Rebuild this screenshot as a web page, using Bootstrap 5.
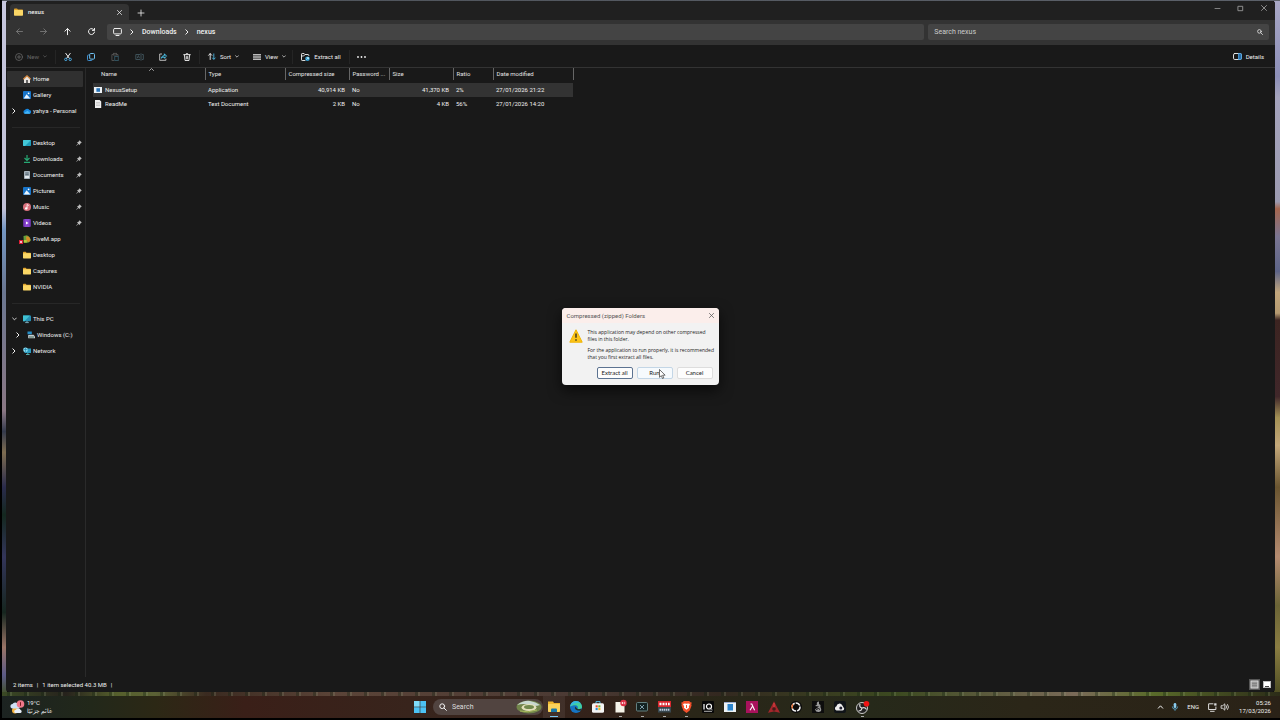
<!DOCTYPE html>
<html lang="en">
<head>
<meta charset="utf-8">
<meta name="viewport" content="width=device-width, initial-scale=1">
<title>nexus</title>
<link href="https://cdn.jsdelivr.net/npm/bootstrap@5.3.0/dist/css/bootstrap.min.css" rel="stylesheet">
<style>
body{font-family:Roboto,"Noto Sans",sans-serif;font-size:6px;line-height:10px;color:#f0f0f0;background:#000;overflow:hidden}
svg{display:block;flex:none;overflow:visible}
button{background:none;border:0;color:inherit;padding:0;font-size:inherit;line-height:inherit}
a{color:inherit;text-decoration:none}
.s{fill:none;stroke:currentColor;stroke-linecap:round;stroke-linejoin:round}
.desk{padding:1px 5px 4px 4px;margin-left:2px;background:
 repeating-linear-gradient(90deg,#0000 0 5px,#1215 5px 8px,#9a83 8px 10px,#0000 10px 17px) bottom/100% 4px no-repeat,
 linear-gradient(90deg,#3b4a25,#26221c 5%,#56602c 9%,#5b6135 12%,#3a2a20 16%,#5b4438 26%,#4b3a34 45%,#332820 56%,#3c4a20 70%,#7a6a58 84%,#5a6b2a 90%,#2c2c18) bottom/100% 4px no-repeat,
 linear-gradient(90deg,#4c5158,#5c616a) top/100% 1px no-repeat,
 linear-gradient(#c5c6dd 0,#c0c0d6 30%,#7396c2 33%,#6a7690 42%,#8a7784 59%,#343a4c 62%,#7d6c50 65%,#2a2b4c 70%,#14281f 74%,#33355a 80%,#16261f 88%,#9a7466 93%,#5b5a86 97%,#405020 100%) left/5px 100% no-repeat,
 linear-gradient(#a9a8c6 0,#8d8fb8 11%,#a5a4bd 14%,#9c9ab0 29%,#a5664f 30%,#7a7592 34%,#5d6488 39%,#c2a67c 42%,#b59a70 45%,#3c2421 46%,#40272a 57%,#a39054 60%,#c4a87a 64%,#6a5530 70%,#b58b70 80%,#6b6436 87%,#8a7d42 93%,#4a4a20 100%) right/6px 100% no-repeat}
.win{background:#191919;border-radius:3px}
.titlebar{height:19px;background:#202020;border-radius:3px 3px 0 0;padding-left:4px}
.tab{width:119px;height:16px;background:#333;border-radius:4px 4px 0 0;padding:0 7px 0 4px;gap:5px;font-weight:500}
.cap{width:23px;height:14px;color:#999}
.navrow{height:25px;background:#333;padding:0 6px 2px 1px;font-size:7px}
.nb{width:24px}
.field{height:16px;background:#444;border-radius:2px}
.crumb{gap:8px;padding-left:6px;font-weight:500}
.field input{background:none;border:0;color:#ccc;font-size:7px;padding:0;outline:0;min-width:0}
.field input::placeholder{color:#ccc;opacity:1}
.findbox{flex:0 0 27%;padding:0 6px}
.tools{height:23px;border-bottom:1px solid #333;padding:1px 11px 0 1px;font-weight:500}
.tools button{height:14px;display:flex;align-items:center;justify-content:center;gap:4px}
.dim{color:#666}
.dimmer{color:#777}
.sep{border-left:1px solid #252525!important}
.side{width:80px;border-right:1px solid #2a2a2a;padding:3px 2px 0 1px}
.side a{height:16px;display:flex;align-items:center;gap:2px;position:relative;white-space:nowrap;border-radius:1px;padding-right:1px}
.side a.on{background:#303030}
.slot{width:14px;flex:none;display:flex;justify-content:center}
.side .sub{padding-left:4px}
.side hr{margin:8px 3px 7px 5px;border-color:#555}
.pin{margin-left:auto;color:#bbb}
.dot{left:13px;top:9px}
.files{width:480px;table-layout:fixed;margin:0 0 0 7px}
.files th{font-weight:400;height:12px;padding:0 3px;border-right:1px solid #666;position:relative;white-space:nowrap;overflow:hidden;color:#e4e4e4}
.files th:first-child{padding-left:8px}
.files thead::after{content:"";display:block;height:3px}
.files td{height:14px;padding:0 4px 0 3px;white-space:nowrap}
.files td:first-child{padding-left:1px}
.fname{display:flex;align-items:center;gap:3px}
.files .pick td{background:#333;border-bottom:1px solid #191919}
.sortmark{position:absolute;left:56px;top:0}
.status{height:15px;padding:0 4px 0 7px;gap:4px}
.bar{height:22px;margin:0 0 2px 2px;display:grid;grid-template-columns:1fr auto 1fr;background:linear-gradient(90deg,#1c2321,#22281a 7%,#2c2815 12%,#3a1f18 19%,#38241c 32%,#33221a 47%,#2a2618 54%,#26291a 68%,#2b2618 80%,#2a2217)}
.wx{padding-left:8px;gap:3px}
.app{width:22px;height:22px;display:flex;align-items:center;justify-content:center;position:relative}
.run::after{content:"";position:absolute;bottom:1px;width:3px;height:1px;background:#aaa}
.run.cur{background:#fff1}
.run.cur::after{width:8px;background:#7ac4f0}
.tsearch{width:110px;height:16px;background:#514440;border-radius:8px;padding:0 1px 0 6px;gap:5px;margin-left:2px}
.tsearch input{background:none;border:0;padding:0;outline:0;min-width:0;color:#ddd;font-size:7px}
.tsearch input::placeholder{color:#ddd;opacity:1}
.tray{gap:9px;padding-right:9px}
.tiny{line-height:8px}
.over{position:absolute;inset:0 0 28px 0;display:flex;align-items:center;justify-content:center}
.dlg{width:157px;background:#f2f2f2;border-radius:4px;color:#222;box-shadow:0 5px 14px #000a;line-height:7px}
.dlg header{height:15px;background:#fbeeeb;color:#555;border-radius:4px 4px 0 0;padding:0 5px}
.dlg p{margin:0 0 4px;font-family:"Open Sans",sans-serif;font-size:5px}
.dbody{padding:6px 0 0 7px;gap:5px}
.dfoot{gap:4px;padding:2px 6px 6px;justify-content:flex-end}
.dfoot button{width:36px;height:12px;background:#fdfdfd;border:1px solid #ddd;border-radius:2px;position:relative;font-family:Lato,sans-serif}
.dfoot .main{border-color:#5c7391}
.dfoot .hot{border-color:#c3d6e6;background:#f6fafd}
.ptr{position:absolute;left:21px;top:1px}
</style>
</head>
<body class="vh-100 d-flex flex-column">
<svg width="0" height="0" class="position-absolute">
<symbol id="fold" viewBox="0 0 9 8"><path d="M0 1.2Q0 .4.8.4H3l1 1h4.2q.8 0 .8.8V4H0z" fill="#e0a32c"/><rect y="2" width="9" height="5.8" rx=".7" fill="#fbd766"/></symbol>
<symbol id="chr" viewBox="0 0 4 6"><path class="s" d="M.8.8 3 3 .8 5.2"/></symbol>
<symbol id="chd" viewBox="0 0 6 4"><path class="s" d="M.8.8 3 3 5.2.8"/></symbol>
<symbol id="x" viewBox="0 0 6 6"><path class="s" stroke-width=".9" d="m.5.5 5 5m0-5-5 5"/></symbol>
<symbol id="pin" viewBox="0 0 6 6"><path d="M3.4.2 5.8 2.6 4.6 3.2 3.6 5 2.5 3.9.5 5.8.2 5.5 2.1 3.5 1 2.4l1.8-1z" fill="currentColor"/></symbol>
<symbol id="mag" viewBox="0 0 8 8"><circle class="s" cx="3.2" cy="3.2" r="2.4"/><path class="s" d="M5 5l2.4 2.4"/></symbol>
<symbol id="pic" viewBox="0 0 8 8"><rect width="8" height="8" rx="1" fill="#1874c8"/><path d="M.6 7.4 3.6 3.2 7.4 7.4z" fill="#e9f5ff"/><circle cx="5.6" cy="2.3" r=".9" fill="#fff"/></symbol>
</svg>

<main class="desk flex-grow-1 d-flex flex-column">
<section class="win flex-grow-1 d-flex flex-column">
  <div class="titlebar d-flex align-items-end">
    <div class="tab d-flex align-items-center"><svg width="9" height="8"><use href="#fold"/></svg><span>nexus</span><button class="ms-auto" aria-label="Close tab"><svg width="5" height="5"><use href="#x"/></svg></button></div>
    <button class="nb d-flex justify-content-center align-self-center pt-1" aria-label="New tab"><svg width="6" height="6"><path class="s" stroke-width=".8" d="M3 0v6M0 3h6"/></svg></button>
    <div class="ms-auto d-flex align-self-start">
      <button class="cap d-flex align-items-center justify-content-center" aria-label="Minimise"><svg width="5" height="5"><path class="s" stroke-width=".8" d="M0 2.5h5"/></svg></button>
      <button class="cap d-flex align-items-center justify-content-center" aria-label="Maximise"><svg width="5" height="5"><path class="s" stroke-width=".9" d="M.3.3h4.4v4.4H.3z"/></svg></button>
      <button class="cap d-flex align-items-center justify-content-center" aria-label="Close"><svg width="6" height="6"><use href="#x"/></svg></button>
    </div>
  </div>
  <div class="navrow d-flex align-items-center">
    <button class="nb d-flex justify-content-center dimmer" aria-label="Back"><svg width="7" height="7"><path class="s" stroke-width=".9" d="M6.5 3.5H.6M3.2.8.5 3.5l2.7 2.7"/></svg></button>
    <button class="nb d-flex justify-content-center dimmer" aria-label="Forward"><svg width="7" height="7"><path class="s" stroke-width=".9" d="M.5 3.5h5.9M3.8.8l2.7 2.7-2.7 2.7"/></svg></button>
    <button class="nb d-flex justify-content-center" aria-label="Up"><svg width="7" height="7"><path class="s" stroke-width="1" d="M3.5 6.7V.6M.9 3.2 3.5.5l2.6 2.7"/></svg></button>
    <button class="nb d-flex justify-content-center" aria-label="Refresh"><svg width="7" height="7"><path class="s" stroke-width="1" d="M6.2 2.2A3 3 0 1 0 6.5 4M6.5.4v2H4.4"/></svg></button>
    <nav class="field crumb flex-grow-1 d-flex align-items-center ms-1 me-1" aria-label="Path">
      <svg width="9" height="8"><rect class="s" x=".6" y=".5" width="7.8" height="5.4" rx="1"/><path class="s" d="M3 7.5h3"/></svg>
      <svg width="4" height="6"><use href="#chr"/></svg><a href="#">Downloads</a>
      <svg width="4" height="6"><use href="#chr"/></svg><a href="#">nexus</a>
    </nav>
    <div class="field findbox d-flex align-items-center"><input class="flex-grow-1" type="text" placeholder="Search nexus" aria-label="Search nexus"><svg width="6" height="6"><use href="#mag"/></svg></div>
  </div>
  <div class="tools d-flex align-items-center">
    <button class="dim" style="width:48px"><svg width="8" height="8"><circle class="s" cx="4" cy="4" r="3.5" stroke-width=".8"/><path class="s" stroke-width=".8" d="M4 2.4v3.2M2.4 4h3.2"/></svg>New<svg width="4" height="3"><use href="#chd"/></svg></button>
    <button class="nb sep" aria-label="Cut"><svg width="8" height="8"><path class="s" d="m1.8.4 3.6 5M6.2.4l-3.6 5"/><g fill="none" stroke="#4aa8e0"><circle cx="1.8" cy="6.4" r="1.2"/><circle cx="6.2" cy="6.4" r="1.2"/></g></svg></button>
    <button class="nb" aria-label="Copy"><svg width="8" height="8"><path fill="none" stroke="#3f8fd0" d="M2.5 2H1.2q-.7 0-.7.7v4q0 .8.8.8h3.2q.7 0 .8-.9"/><rect x="2.7" y=".5" width="4.8" height="5.6" rx="1" fill="none" stroke="#6fc0f0"/></svg></button>
    <button class="nb" aria-label="Paste"><svg width="8" height="8" fill="none" stroke="#4e4e4e"><path d="M3 7.5H.9v-6h1.6M5.4 1.5H7V3"/><rect x="2.5" y=".4" width="3" height="1.6"/><rect x="3.7" y="3.5" width="3.6" height="4" stroke="#31505c"/></svg></button>
    <button class="nb" aria-label="Rename"><svg width="9" height="8" fill="none" stroke="#3e5058"><path d="M5 1.5H.8v5H5M7 1.5h1.3v5H7M6 .3v7.4M2.2 5.2l1.2-2.6 1 2.6"/></svg></button>
    <button class="nb" aria-label="Share"><svg width="8" height="8" fill="none"><path stroke="#ccc" stroke-width=".9" d="M3 1H.7v6.3h6.2V5.6"/><path stroke="#4cc3ea" d="M2.4 5.2q.3-2.6 3-2.6V.8l2.1 2.4-2.1 2V4Q3.4 3.9 2.4 5.2z"/></svg></button>
    <button class="nb" aria-label="Delete"><svg width="8" height="8"><path class="s" d="M.7 1.7h6.6M2.9 1.5q0-1.100 1.100-1.100t1.100 1.100M1.400 1.900l.6 5.600h4l.6-5.600M3.300 3.500v2.400M4.700 3.500v2.400" stroke-width=".9"/></svg></button>
    <button class="sep" style="width:48px"><svg width="8" height="7"><path class="s" stroke-width=".9" d="M2.200 6.500V.7M.6 2.300 2.200.6l1.600 1.700"/><path d="M5.800.5v5.800M4.200 4.700l1.600 1.700 1.600-1.700" fill="none" stroke="#4cb4e0" stroke-width=".9"/></svg>Sort<svg width="4" height="3"><use href="#chd"/></svg></button>
    <button style="width:45px"><svg width="8" height="6"><path d="M0 .8h8M0 3h8M0 5.200h8" stroke="#bbb" stroke-width="1.400"/></svg>View<svg width="4" height="3"><use href="#chd"/></svg></button>
    <button class="sep" style="width:57px"><svg width="9" height="8"><path class="s" stroke-width=".9" d="M4 7.500H1.200q-.7 0-.7-.7V1.200q0-.7.7-.7h1.900l1 1h3q.8 0 .8.9M.6 3h2l1.500-1.500"/><circle cx="6.500" cy="5.700" r="2.300" fill="#2f9bd0"/><path d="m5.400 6.700 2-2M5.800 4.600h1.700v1.700" fill="none" stroke="#dff" stroke-width=".7"/></svg>Extract all</button>
    <button class="nb sep" aria-label="More"><svg width="9" height="2" fill="currentColor"><circle cx="1" cy="1" r=".9"/><circle cx="4.500" cy="1" r=".9"/><circle cx="8" cy="1" r=".9"/></svg></button>
    <button class="ms-auto"><svg width="9" height="7"><rect class="s" x=".5" y=".5" width="8" height="6" rx="1.300" stroke-width=".9"/><path d="M5.500.5h1.700q1.300 0 1.300 1.300v3.400q0 1.300-1.300 1.300H5.500z" fill="#2a6ea8" stroke="#4ea6e6" stroke-width=".8"/></svg>Details</button>
  </div>
  <div class="d-flex flex-grow-1">
    <nav class="side" aria-label="Folders">
      <a class="on" href="#"><span class="slot"></span><svg width="8" height="8"><path d="M1 3.500V8h2.300V5h1.400v3H7V3.500L4 1z" fill="#e8e4e0"/><path d="M.3 4.300 4 .800l3.700 3.500" fill="none" stroke="#d98c42" stroke-width="1.200"/></svg>Home</a>
      <a href="#"><span class="slot"></span><svg width="8" height="8"><use href="#pic"/></svg>Gallery</a>
      <a href="#"><span class="slot"><svg width="4" height="6"><use href="#chr"/></svg></span><svg width="8" height="8"><path d="M2 6.800a1.900 1.900 0 0 1-.2-3.700A2.600 2.600 0 0 1 6.400 3 1.900 1.900 0 0 1 6.200 6.800z" fill="#1687e0"/><path d="M1 6 4.600 3.800l2.800 2.500-1 .5H2z" fill="#45b5f5"/></svg>yahya - Personal</a>
      <hr>
      <a href="#"><span class="slot"></span><svg width="8" height="8"><rect y="1" width="8" height="6" rx=".8" fill="#1e9cb8"/><path d="M0 1.800Q0 1 .800 1H8L2 7H.8Q0 7 0 6.200z" fill="#43c8d8"/></svg>Desktop<svg class="pin" width="6" height="6"><use href="#pin"/></svg></a>
      <a href="#"><span class="slot"></span><svg width="8" height="8"><path d="M4 0v5M1.500 3 4 5.400 6.500 3M1 7.400h6" fill="none" stroke="#27a873" stroke-width="1.200"/></svg>Downloads<svg class="pin" width="6" height="6"><use href="#pin"/></svg></a>
      <a href="#"><span class="slot"></span><svg width="8" height="8"><rect x="1" width="6" height="8" rx=".8" fill="#a8b4bd"/><path d="M2.300 2h3.400M2.300 3.700h3.400" stroke="#536471"/><path d="M2 5h4v2H2z" fill="#e4eaee"/></svg>Documents<svg class="pin" width="6" height="6"><use href="#pin"/></svg></a>
      <a href="#"><span class="slot"></span><svg width="8" height="8"><use href="#pic"/></svg>Pictures<svg class="pin" width="6" height="6"><use href="#pin"/></svg></a>
      <a href="#"><span class="slot"></span><svg width="8" height="8"><circle cx="4" cy="4" r="4" fill="#d9707c"/><circle cx="3.200" cy="5.400" r="1.200" fill="#fff"/><path d="M4.100 5.400V1.500l1.700 1" stroke="#fff" fill="none" stroke-width=".8"/></svg>Music<svg class="pin" width="6" height="6"><use href="#pin"/></svg></a>
      <a href="#"><span class="slot"></span><svg width="8" height="8"><rect x=".3" width="7.400" height="8" rx="1" fill="#8a45d0"/><path d="M1.200.500v7M6.800.500v7" stroke="#5b259a" stroke-dasharray="1 1"/><path d="m3 2.500 2.600 1.500L3 5.500z" fill="#fff"/></svg>Videos<svg class="pin" width="6" height="6"><use href="#pin"/></svg></a>
      <a href="#"><span class="slot"></span><svg class="dot position-absolute" width="4" height="4"><rect x="-1" width="4" height="4" fill="#dc1f36"/><path d="m0 1 2 2m0-2-2 2" stroke="#fff" stroke-width=".7"/></svg><svg width="8" height="8"><path d="M.5 1 4 .300l3 2.200.8 3.200L5 7.800H.8z" fill="#66a03c"/><path d="M3 1.500h2.500l2 3L6 7.300 3.500 6z" fill="#d98c28"/><path d="M.8 5h3v2.600h-3z" fill="#b9c83b"/></svg>FiveM.app</a>
      <a href="#"><span class="slot"></span><svg width="8" height="8"><use href="#fold"/></svg>Desktop</a>
      <a href="#"><span class="slot"></span><svg width="8" height="8"><use href="#fold"/></svg>Captures</a>
      <a href="#"><span class="slot"></span><svg width="8" height="8"><use href="#fold"/></svg>NVIDIA</a>
      <hr>
      <a href="#"><span class="slot"><svg width="5" height="4"><use href="#chd"/></svg></span><svg width="8" height="8"><rect y=".5" width="8" height="5.800" rx=".7" fill="#2690b4"/><path d="M0 .500h7L1.500 6.300H0z" fill="#3fc1d2"/><path d="M4 6v1.500M2.200 7.600h3.600" stroke="#7ab"/></svg>This PC</a>
      <a class="sub" href="#"><span class="slot"><svg width="4" height="6"><use href="#chr"/></svg></span><svg width="8" height="8"><path d="M.5.500h4.300v2.800H.5z" fill="#258ec8"/><path d="m1.200 4 5.300-.2L8 5.500v1.800H1.200z" fill="#c5cdd2"/><path d="M2 6h5" stroke="#465"/></svg>Windows (C:)</a>
      <a href="#"><span class="slot"><svg width="4" height="6"><use href="#chr"/></svg></span><svg width="8" height="8"><rect x="1.500" y="1.500" width="6.500" height="4.500" fill="#2a9bc0"/><circle cx="2.500" cy="2.800" r="2.400" fill="#8adcf0"/><path d="M.5 2.500h4M2.500.5v4.600" stroke="#1b80a8" stroke-width=".6"/><path d="M4.800 6v1.500M3 7.500h3.600" stroke="#5aa"/></svg>Network</a>
    </nav>
    <div>
      <table class="files">
        <colgroup><col style="width:112px"><col style="width:80px"><col style="width:64px"><col style="width:40px"><col style="width:64px"><col style="width:40px"><col style="width:80px"></colgroup>
        <thead><tr><th scope="col">Name<svg class="sortmark" width="5" height="3"><path class="s" stroke-width=".7" d="m.5 2.500 2-2 2 2"/></svg></th><th scope="col">Type</th><th scope="col">Compressed size</th><th scope="col">Password ...</th><th scope="col">Size</th><th scope="col">Ratio</th><th scope="col">Date modified</th></tr></thead>
        <tbody>
        <tr class="pick"><td><div class="fname"><svg width="8" height="8"><rect y="1" width="8" height="6" fill="#eef3f6"/><rect x="2.400" y="2.200" width="3.600" height="3.600" fill="#2874b8"/></svg>NexusSetup</div></td><td>Application</td><td class="text-end">40,914 KB</td><td>No</td><td class="text-end">41,370 KB</td><td>2%</td><td>27/01/2026 21:22</td></tr>
        <tr><td><div class="fname"><svg width="8" height="8"><path d="M1 0h4.600L7.200 1.600V8H1z" fill="#f0f0f0"/><path d="M2 2.500h4M2 4h4M2 5.500h4" stroke="#aaa" stroke-width=".5"/></svg>ReadMe</div></td><td>Text Document</td><td class="text-end">2 KB</td><td>No</td><td class="text-end">4 KB</td><td>56%</td><td>27/01/2026 14:20</td></tr>
        </tbody>
      </table>
    </div>
  </div>
  <footer class="status d-flex align-items-center"><span>2 items</span><span>|</span><span>1 item selected 40.3 MB</span><span>|</span>
    <span class="ms-auto d-flex"><button aria-label="Details view"><svg width="11" height="11"><rect width="11" height="11" fill="#555"/><rect x="2" y="2" width="7" height="7" fill="#999" stroke="#ddd"/><path d="M3 4.500h5M3 6.500h5" stroke="#777" stroke-width=".6"/></svg></button><button class="ps-1" style="width:11px" aria-label="Large icons"><svg width="7" height="11"><rect x="-.5" y="2.500" width="7" height="6" fill="#fff" stroke="#bbb"/><path d="M1 7.500h4" stroke="#444"/></svg></button></span>
  </footer>
</section>
</main>

<footer class="bar">
  <a href="#" class="wx d-flex align-items-center tiny"><svg width="14" height="14"><circle cx="5" cy="10.500" r="3" fill="#f4b23c"/><path d="M2 8.500a2.300 2.300 0 0 1 .5-4.500A3 3 0 0 1 8 4.500a2 2 0 0 1 0 4z" fill="#cfe0f5"/><path d="M5 13a1.800 1.800 0 0 1 1-3.300 2.500 2.500 0 0 1 4.600.4A1.500 1.500 0 0 1 10.500 13z" fill="#e8eef8"/><circle cx="10.500" cy="4" r="3.800" fill="#f0788a"/><path d="M10.500 2.200v3.600" stroke="#611" stroke-width=".9"/></svg><span>19°C<br><span lang="ar" dir="rtl">غائم جزئيًا</span></span></a>
  <div class="d-flex align-items-center">
    <button class="app" aria-label="Start"><svg width="12" height="12" fill="#4cc2f4"><path d="M0 0h5.700v5.700H0z" fill="#7fdcfa"/><path d="M6.300 0H12v5.700H6.300zM0 6.300h5.700V12H0zM6.300 6.300H12V12H6.300z"/></svg></button>
    <div class="tsearch d-flex align-items-center"><svg width="8" height="8"><use href="#mag"/></svg><input class="flex-grow-1" type="text" placeholder="Search" aria-label="Search"><svg width="26" height="14"><ellipse cx="13" cy="7" rx="12.500" ry="6.500" fill="#71844a"/><path d="M1 5Q8 0 14 1t10 4Q18 7 13 5T1 5z" fill="#c8d8d0"/><ellipse cx="13" cy="7.500" rx="7.500" ry="3.500" fill="#e1dfba"/><ellipse cx="13" cy="7" rx="5" ry="2" fill="#71894d"/><path d="M4 11q8 2 17-1" stroke="#a9b95d" fill="none"/></svg></div>
    <button class="app run cur" aria-label="File Explorer"><svg width="12" height="12"><path d="M0 .500h5l1 1.500h6V10H0z" fill="#f0b62d"/><rect y="3" width="12" height="8" rx=".7" fill="#fbd35c"/><path d="M3 11V8.500q0-1 1-1h4q1 0 1 1V11z" fill="#1878a8"/></svg></button>
    <button class="app" aria-label="Edge"><svg width="12" height="12"><circle cx="6" cy="6" r="6" fill="#1674c4"/><path d="M.2 5.500C1-1.500 12-1.300 12 6c0 2-3 2.700-4.600 1.500C9 5.500 6.500 2.500.2 5.500z" fill="#42cfa0"/><path d="M.2 5.500Q1 0 6 0q3 0 4.500 2Q5 1 .2 5.500z" fill="#35b8df"/><path d="M5 5.500q-1 4.300 5.500 4.300Q12 8 11 7.800 7.500 9 6.400 6.800z" fill="#22362c"/></svg></button>
    <button class="app" aria-label="Store"><svg width="12" height="12"><path d="M4 3V.600h4V3" fill="none" stroke="#58b8e0"/><rect y="2.300" width="12" height="9.500" rx="1.500" fill="#f4f4f4"/><path d="M3.600 4.300h2.100v2.100H3.600z" fill="#e54b2c"/><path d="M6.300 4.300h2.100v2.100H6.300z" fill="#6db52e"/><path d="M3.600 7h2.100v2.100H3.600z" fill="#248fd8"/><path d="M6.300 7h2.100v2.100H6.300z" fill="#f3b51a"/></svg></button>
    <button class="app run" aria-label="Notes"><svg width="13" height="14"><path d="M1.500 2h9v10.500h-9z" fill="#f5f3e8"/><circle cx="9.500" cy="3" r="3.200" fill="#dc2f44"/><path d="M7.500 3h2M8.500 2v2M10.700 1.800v2.400" stroke="#fff" stroke-width=".7"/></svg></button>
    <button class="app run" aria-label="Remote"><svg width="12" height="10"><rect x=".5" y=".5" width="11" height="8.500" rx="1" fill="#142322" stroke="#648080"/><path d="m4 3 4 4m0-4L4 7" stroke="#9bc" stroke-width=".8"/></svg></button>
    <button class="app run" aria-label="Voicemeeter"><svg width="13" height="12"><rect width="13" height="6" fill="#d9272e"/><rect y="6" width="13" height="5.500" fill="#38474e"/><path d="M1.500 3h2M4.500 3h2M7.500 3h1.500M10 3h1.700" stroke="#fff" stroke-width="2.400"/><path d="M1.500 8.700h10" stroke="#bcd" stroke-width="2" stroke-dasharray="1.500 .6"/></svg></button>
    <button class="app run" aria-label="Brave"><svg width="11" height="12"><path d="M2.800 0h5.400L9.400 1.200l1.300.3-.4 2 .3 1-1.900 5-3.200 2.500-3.200-2.500L.4 4.500l.3-1-.4-2 1.300-.3z" fill="#f4512c"/><path d="m2 3 1.800-.500L5.500 2.800l1.700-.3L9 3 7.800 5.600l.3 1.200-2.600 1.900L2.900 6.800l.3-1.200z" fill="#fff"/><path d="M5.500 4v3" stroke="#f4512c"/></svg></button>
    <button class="app" aria-label="IQ"><svg width="12" height="12"><rect width="12" height="12" rx="1" fill="#080808"/><path d="M2 3v5.500" stroke="#fff" stroke-width="1.200"/><circle cx="7" cy="5.500" r="2.500" fill="none" stroke="#fff" stroke-width="1.200"/><path d="m7.500 6.500 3 2.500M2 10.300h8" stroke="#ddd" stroke-width=".8"/></svg></button>
    <button class="app" aria-label="Setup"><svg width="12" height="10"><rect width="12" height="10" fill="#edf2f5"/><rect x="3.500" y="2" width="5.500" height="6.500" fill="#2b84cc"/><path d="M0 .500h12" stroke="#9ac"/></svg></button>
    <button class="app" aria-label="Lambda"><svg width="12" height="12"><rect width="12" height="12" fill="#a8125c"/><path d="M4.500 3h1.300l2.800 6.300M6.500 5.200 4 9.300" fill="none" stroke="#fff" stroke-width="1.100"/></svg></button>
    <button class="app" aria-label="Alert"><svg width="12" height="12"><path d="m6 .300 2.700 5.200L12 11.700 6 10.500 0 11.700l3.300-6.200z" fill="#a3262b"/><circle cx="6" cy="8" r="1.800" fill="#421b1a"/><path d="M6 2v4" stroke="#d44"/></svg></button>
    <button class="app" aria-label="Ring"><svg width="12" height="12"><circle cx="6" cy="6" r="6" fill="#0b0b0b"/><circle cx="6" cy="6" r="4" fill="none" stroke="#eee" stroke-width="1.500" stroke-dasharray="5 1"/><path d="M2.300 7.500A4 4 0 0 1 3 3.300" fill="none" stroke="#e26a2c" stroke-width="1.500"/></svg></button>
    <button class="app" aria-label="Game"><svg width="12" height="12"><rect width="12" height="12" fill="#0d0d0d"/><path d="M7 .500Q4 .800 5 3.500L3 5l4 .5L3 8.500q1 3 4 2.500t2-3.500Q8 6 8.500 4L7 3z" fill="#999"/><path d="M4 8.500q3-2 4 0" stroke="#111" fill="none"/></svg></button>
    <button class="app" aria-label="Cloud"><svg width="12" height="12"><rect width="12" height="12" rx="2" fill="#101418"/><path d="M2.500 9.500a2.200 2.200 0 0 1 0-4.200 3 3 0 0 1 5.700-1l2 3.200q0 2-1.700 2z" fill="#eee"/><circle cx="6.800" cy="7" r="1.500" fill="#223"/></svg></button>
    <button class="app run" aria-label="OBS"><svg width="13" height="13"><circle cx="6" cy="7" r="5.500" fill="#222" stroke="#ddd" stroke-width=".9"/><path d="M6 7Q3 6.500 4 3M6 7q3-1 4.500 1.500M6 7q-.5 3-3.500 3" fill="none" stroke="#ddd" stroke-width="1.200"/><circle cx="10.500" cy="2.800" r="2.800" fill="#f01414"/></svg></button>
  </div>
  <div class="tray d-flex align-items-center justify-content-end">
    <svg width="5" height="4"><path class="s" d="m.3 3.200 2.200-2.400 2.200 2.400"/></svg>
    <svg width="6" height="8"><rect x="1.700" width="2.600" height="5" rx="1.300" fill="#8acdf0"/><path d="M.4 3.500q0 2.700 2.600 2.700T5.600 3.500M3 6.200v1.600" fill="none" stroke="#5fb4e0" stroke-width=".8"/></svg>
    <span>ENG</span>
    <span class="d-flex gap-1 align-items-center"><svg width="9" height="9"><path class="s" stroke-width=".9" d="M5 .800H.6v5.700h7.300V4M2.500 8.300h3.700"/><rect x="6.200" y=".3" width="2.300" height="2.300" fill="#ddd"/></svg><svg width="9" height="8"><path class="s" stroke-width=".8" d="M.5 2.700h1.300L3.800.800v6.400l-2-1.900H.5zM5.200 2.600q1 1.400 0 2.800M6.600 1.500q2 2.500 0 5"/></svg></span>
    <span class="text-end tiny">05:26<br>17/03/2026</span>
  </div>
</footer>

<div class="over">
  <div class="dlg" role="dialog" aria-labelledby="dt">
    <header class="d-flex align-items-center"><span id="dt">Compressed (zipped) Folders</span><button class="ms-auto" aria-label="Close dialog"><svg width="5" height="5"><use href="#x"/></svg></button></header>
    <div class="dbody d-flex"><svg width="14" height="14"><path d="M7 .800.8 13.200h12.400z" fill="#fcc419" stroke="#f0b400" stroke-linejoin="round"/><path d="M7 4.500v4.300M7 10.300v1.400" stroke="#222" stroke-width="1.300"/></svg>
      <div><p>This application may depend on other compressed<br>files in this folder.</p><p>For the application to run properly, it is recommended<br>that you first extract all files.</p></div></div>
    <div class="dfoot d-flex"><button class="main">Extract all</button><button class="hot">Run<svg class="ptr" width="7" height="10"><path d="M.5.500v7.800l1.800-1.700 1.200 2.900 1.300-.6-1.200-2.700h2.500z" fill="#fff" stroke="#333" stroke-width=".7"/></svg></button><button>Cancel</button></div>
  </div>
</div>
<script src="https://cdn.jsdelivr.net/npm/bootstrap@5.3.0/dist/js/bootstrap.bundle.min.js"></script>
</body>
</html>
